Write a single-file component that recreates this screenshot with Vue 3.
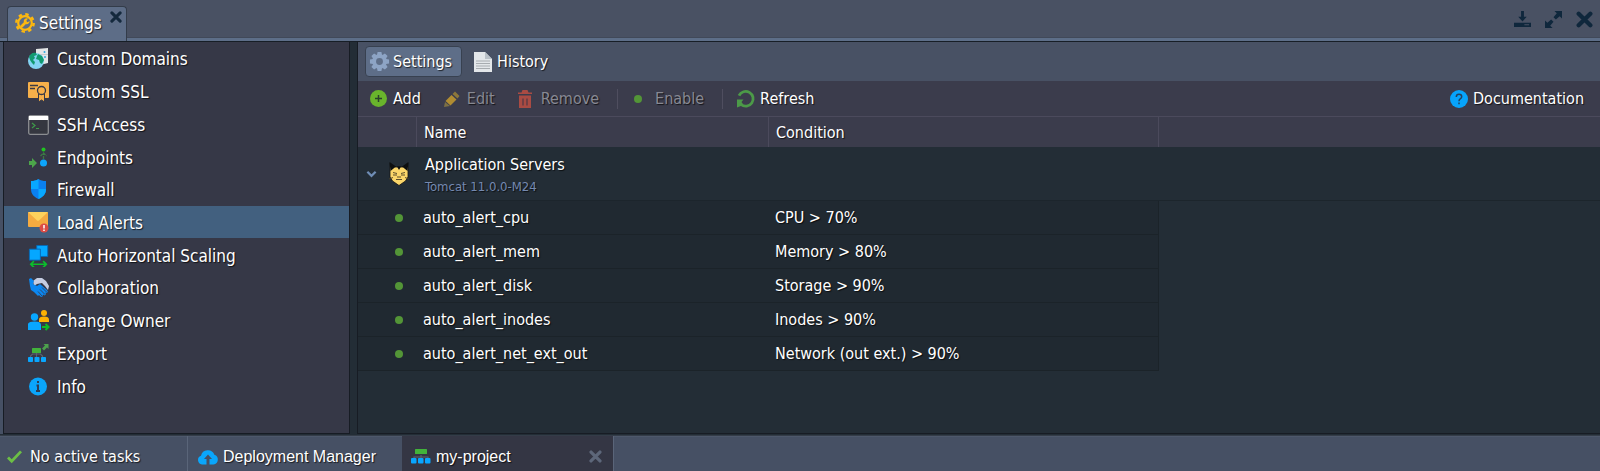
<script setup>
import { ref } from 'vue'

const menu = [
  { id: 'domains', label: 'Custom Domains' },
  { id: 'ssl', label: 'Custom SSL' },
  { id: 'ssh', label: 'SSH Access' },
  { id: 'endpoints', label: 'Endpoints' },
  { id: 'firewall', label: 'Firewall' },
  { id: 'alerts', label: 'Load Alerts' },
  { id: 'scaling', label: 'Auto Horizontal Scaling' },
  { id: 'collab', label: 'Collaboration' },
  { id: 'owner', label: 'Change Owner' },
  { id: 'export', label: 'Export' },
  { id: 'info', label: 'Info' },
]
const active = ref('alerts')

const alerts = [
  { name: 'auto_alert_cpu', condition: 'CPU > 70%' },
  { name: 'auto_alert_mem', condition: 'Memory > 80%' },
  { name: 'auto_alert_disk', condition: 'Storage > 90%' },
  { name: 'auto_alert_inodes', condition: 'Inodes > 90%' },
  { name: 'auto_alert_net_ext_out', condition: 'Network (out ext.) > 90%' },
]
</script>

<template>
  <div class="app">
    <svg class="sprite" aria-hidden="true">
      <symbol id="i-domains" viewBox="0 0 22 22">
        <path d="M8 1l12-1v15l-12 3z" fill="#e3e5e6" />
        <path d="M8 6h12v1H8z" fill="#c3c8cb" />
        <circle cx="16.500" cy="4" r="1" fill="#2fa9e0" /><circle cx="17" cy="9" r="1" fill="#2fa9e0" />
        <circle cx="8" cy="13" r="8" fill="#84d3f3" />
        <path d="M1 9c1-3 4-5 7-4l1 2-3 1 1 2-2 2 2 2-1 3-2-2-2-3zM10 6l4 2 2 4-2 4-2-1-1-3-3-1 1-3z" fill="#129a70" />
      </symbol>
      <symbol id="i-ssl" viewBox="0 0 22 22">
        <rect y="1" width="21" height="16" rx="1" fill="#f7b04a" />
        <path d="M2 4.500h8M2 7.500h5" stroke="#3b3a45" stroke-width="1.300" />
        <path d="M10.500 13v8l3-2 3 2v-8z" fill="#f7b04a" stroke="#363847" />
        <circle cx="13.500" cy="9.500" r="4" fill="#f7b04a" stroke="#363847" stroke-width="1.300" />
      </symbol>
      <symbol id="i-ssh" viewBox="0 0 22 22">
        <rect x=".7" y="1.700" width="19.600" height="18.600" rx="1.500" fill="#353740" stroke="#8b8d91" stroke-width="1.300" />
        <path d="M1 2h19v4H1z" fill="#fff" />
        <path d="M4 9l3 2.500L4 14M8 14.500h3" fill="none" stroke="#3f9a49" stroke-width="1.200" />
      </symbol>
      <symbol id="i-endpoints" viewBox="0 0 22 22">
        <circle cx="15.500" cy="2.500" r="2" fill="#20c520" />
        <path d="M15.500 12V6M12.500 9l3-3 3 3" fill="none" stroke="#3c7a44" stroke-width="1.300" stroke-dasharray="3 1" />
        <circle cx="15.500" cy="16" r="3.500" fill="#0da5fb" />
        <path d="M1 14h3v-3l5 5-5 5v-3H1z" fill="#4ca64a" />
      </symbol>
      <symbol id="i-firewall" viewBox="0 0 22 22">
        <path d="M10.500 0c2 1.500 4.500 2 7.500 2v8c0 5-3 8-7.500 10C6 18 3 15 3 10V2c3 0 5.500-.5 7.500-2z" fill="#0a80f0" />
        <path d="M10.500 0C8.500 1.500 6 2 3 2v8h7.500zM10.500 10H18c0 5-3 8-7.500 10z" fill="#08a8ff" />
      </symbol>
      <symbol id="i-alerts" viewBox="0 0 22 22">
        <rect width="20" height="15" rx="1" fill="#f5ab40" />
        <path d="M0 0h20l-8.500 8a2 2 0 0 1-3 0z" fill="#fed25c" />
        <circle cx="16" cy="16" r="4.500" fill="#dc4c45" />
        <path d="M16 13v3.500M16 17.500V19" stroke="#fff" stroke-width="1.500" />
      </symbol>
      <symbol id="i-scaling" viewBox="0 0 22 24">
        <path d="M8.500 .5h12v12h-12z" fill="#05a7ff" stroke="#0768b6" />
        <path d="M.5 4.500h12v12H.5z" fill="#05a7ff" stroke="#0768b6" />
        <path d="M2 21h17M5.500 17.500L2 21l3.500 3.500M15.500 17.500L19 21l-3.500 3.500" fill="none" stroke="#0abf2b" stroke-width="1.800" />
      </symbol>
      <symbol id="i-collab" viewBox="0 0 22 22">
        <path d="M5 4l4-3h5l4 3 3 5-1 4-3-4-3-3-5 1-3 2z" fill="#c6cde2" />
        <path d="M1 2l2-1 3 3-1 3 4 2 3-2 7 6 1 2-1.500 1-1-.5.500 2-1.500 1-1.500-1-.5 2-1.500.5-2-2-1 1-4-4-3-2-1-4z" fill="#0b87f2" />
        <path d="M14 10.500l5 5M12 12.500l5 5M10 14.500l4 4.500" stroke="#363847" stroke-width=".8" />
      </symbol>
      <symbol id="i-owner" viewBox="0 0 22 22">
        <circle cx="16" cy="3" r="3" fill="#fdb204" /><path d="M11 12V9.500q0-3 5-3t5 3V12z" fill="#fdb204" />
        <circle cx="6.500" cy="7" r="3.700" fill="#08a7ff" />
        <path d="M-.5 20v-4.500q0-4 7-4t6.500 4V20z" fill="#08a7ff" />
        <path d="M14 17h6M17.500 14l3 3-3 3" fill="none" stroke="#0dbb25" stroke-width="2" />
      </symbol>
      <symbol id="i-export" viewBox="0 0 22 22">
        <path d="M8.500 9v6M2.500 15v-2l2-2h8l2 2v2" fill="none" stroke="#5d6270" stroke-width="1.200" />
        <rect x="4" y="5" width="9" height="5" rx=".5" fill="#42b33b" />
        <g fill="#08a6ff"><rect y="14" width="5" height="5" rx=".8" /><rect x="6.500" y="14" width="5" height="5" rx=".8" /><rect x="13" y="14" width="5" height="5" rx=".8" /></g>
        <path d="M15.500 1h5v5l-1.500-1.500-3 3-2-2 3-3z" fill="#4da14d" />
      </symbol>
      <symbol id="i-info" viewBox="0 0 22 22">
        <circle cx="10" cy="10.500" r="9" fill="#0aa6fb" />
        <path d="M10 5v2M8.500 9.500H10V15M8 15h4" fill="none" stroke="#2b3e56" stroke-width="2" />
      </symbol>
      <symbol id="i-env" viewBox="0 0 20 16">
        <path d="M10 6v6M3 11V8h14v3" fill="none" stroke="#5d6270" stroke-width="1.200" />
        <rect x="4" width="12" height="5" rx=".5" fill="#42b33b" />
        <g fill="#08a6ff"><rect y="9" width="5.500" height="5.500" rx="1" /><rect x="7" y="9" width="5.500" height="5.500" rx="1" /><rect x="14" y="9" width="5.500" height="5.500" rx="1" /></g>
      </symbol>
      <symbol id="i-cross" viewBox="0 0 16 16">
        <path d="M2.500 2.500l11 11M13.500 2.500l-11 11" stroke="currentColor" stroke-width="4" stroke-linecap="round" />
      </symbol>
      <symbol id="i-cog" viewBox="0 0 22 22">
        <g fill="currentColor">
          <path d="M9 1h4l1 5H8zM9 21h4l1-5H8zM1 9v4l5 1V8zM21 9v4l-5 1V8z" />
          <path d="M9 1h4l1 5H8zM9 21h4l1-5H8zM1 9v4l5 1V8zM21 9v4l-5 1V8z" transform="rotate(45 11 11)" />
        </g>
        <circle cx="11" cy="11" r="5.600" fill="none" stroke="currentColor" stroke-width="4" />
      </symbol>
    </svg>

    <header class="titlebar">
      <div class="window-tab">
        <svg class="tab-gear" viewBox="0 0 20 20" aria-hidden="true">
          <circle cx="10" cy="10" r="8.700" fill="none" stroke="#fdb80f" stroke-width="2.400" stroke-dasharray="3.400 3.433" />
          <circle cx="10" cy="10" r="6.800" fill="none" stroke="#fdb80f" stroke-width="2.200" />
          <path d="M6.500 13.500l4-4" stroke="#fdb80f" stroke-width="2.600" stroke-linecap="round" />
          <path d="M13 5.500a3 3 0 1 0 1.700 2.500l-2.200 1.300-1.300-1.300z" fill="#fdb80f" />
        </svg>
        <span>Settings</span>
        <button class="tab-close" aria-label="Close Settings"><svg viewBox="0 0 16 16"><use href="#i-cross" /></svg></button>
      </div>
      <div class="window-tools">
        <button aria-label="Minimize"><svg viewBox="0 0 18 18"><path d="M7.500 0h3v6h3L9 11 4.500 6h3z" /><path d="M0 12.500h18V17H0zM11 14v1h5v-1z" fill-rule="evenodd" /></svg></button>
        <button aria-label="Expand"><svg viewBox="0 0 18 18"><path d="M10 0h8v8l-2.500-2.500-4 3.500-2.500-2.500 3.500-4zM8 18H0v-8l2.500 2.500 4-3.500L9 11.500l-3.500 4z" /></svg></button>
        <button aria-label="Close"><svg viewBox="0 0 16 16"><use href="#i-cross" /></svg></button>
      </div>
    </header>

    <main class="body">
      <nav class="sidebar" aria-label="Settings sections">
        <ul>
          <li v-for="item in menu" :key="item.id">
            <button :class="{ on: item.id === active }" @click="active = item.id">
              <svg viewBox="0 0 22 22" aria-hidden="true"><use :href="'#i-' + item.id" /></svg>
              <span>{{ item.label }}</span>
            </button>
          </li>
        </ul>
      </nav>

      <section class="panel">
        <div class="tabs">
          <button class="tab on">
            <svg class="cog" viewBox="0 0 22 22" aria-hidden="true"><use href="#i-cog" /></svg>
            <span>Settings</span>
          </button>
          <button class="tab">
            <svg class="doc" viewBox="0 0 18 20" aria-hidden="true">
              <path d="M0 0h11l7 7v13H0z" fill="#e3e7ea" /><path d="M11 0l7 7h-7z" fill="#b9c1c8" />
              <path d="M2 9h14M2 11.500h14M2 14h14M2 16.500h14" stroke="#a7acb0" />
            </svg>
            <span>History</span>
          </button>
        </div>

        <div class="toolbar">
          <button class="add">
            <svg viewBox="0 0 18 18" aria-hidden="true"><circle cx="8.500" cy="8.500" r="8.500" fill="#69b42c" /><path d="M8.500 5v7M5 8.500h7" stroke="#29412b" stroke-width="1.500" /></svg>
            <span>Add</span>
          </button>
          <button class="edit" disabled>
            <svg viewBox="0 0 18 18" aria-hidden="true"><path d="M1 17l1-5 5 4z" fill="#7d7044" /><path d="M2.500 11l6-6 5 4.500-6 6z" fill="#b08c32" /><path d="M9.500 4L12 1.500 16.500 6 14.500 8.500z" fill="#8c773b" /></svg>
            <span>Edit</span>
          </button>
          <button class="remove" disabled>
            <svg viewBox="0 0 14 18" aria-hidden="true"><path d="M0 2.500h3.500l1-2.500h5l1 2.500H14V4H0zM1 5.500h12V18H1z" fill="#a94b43" /><path d="M5 8.500v7M9 8.500v7" stroke="#653c44" stroke-width="1.600" /></svg>
            <span>Remove</span>
          </button>
          <i class="sep"></i>
          <button class="enable" disabled><b class="dot"></b><span>Enable</span></button>
          <i class="sep"></i>
          <button class="refresh">
            <svg viewBox="0 0 18 18" aria-hidden="true"><path d="M2 5.700A7.400 7.400 0 1 1 4 14.500" fill="none" stroke="#4c9a48" stroke-width="2.800" /><path d="M0 9.500h6.500L4.500 12l2 3L0 17.500z" fill="#4c9a48" /></svg>
            <span>Refresh</span>
          </button>
          <a class="docs" href="#documentation">
            <svg viewBox="0 0 18 18" aria-hidden="true"><circle cx="9" cy="9" r="9" fill="#07a4fb" /><path d="M6.300 7q0-2.700 2.700-2.700t2.700 2.400Q11.700 8 10.200 8.900 9 9.700 9 11.200M9 12.500v1.800" fill="none" stroke="#22425f" stroke-width="1.500" /></svg>
            <span>Documentation</span>
          </a>
        </div>

        <table class="grid">
          <colgroup><col class="c-mark" /><col class="c-name" /><col class="c-cond" /><col /></colgroup>
          <thead>
            <tr><th></th><th>Name</th><th>Condition</th><th></th></tr>
          </thead>
          <tbody>
            <tr class="group">
              <td class="mark">
                <div class="marks">
                  <button class="toggle" aria-label="Collapse group"><svg viewBox="0 0 12 8"><path d="M1.500 1.500L6 6l4.500-4.500" fill="none" stroke="#6f8db5" stroke-width="2.400" /></svg></button>
                  <svg class="cat" viewBox="0 0 20 24" aria-hidden="true">
                    <path d="M1 1l5 4h8l5-4v14l-2.500 4L10 23.500 3.500 19 1 15z" fill="#fbd66a" stroke="#111" stroke-width=".8" />
                    <path d="M.5 0L7 4.500 1.500 9zM19.500 0L13 4.500 18.500 9zM8 4.500h4L10 8z" fill="#0d0f10" />
                    <path d="M4 10.500l4 1M16 10.500l-4 1M4 13h4M16 13h-4M8 15h4M7 17.500h6M0 17l4-1.500M20 17l-4-1.500" fill="none" stroke="#4a4024" stroke-width=".9" />
                  </svg>
                </div>
              </td>
              <td colspan="3"><div class="group-name">Application Servers</div><div class="group-sub">Tomcat 11.0.0-M24</div></td>
            </tr>
            <tr v-for="row in alerts" :key="row.name" class="row">
              <td class="mark"><b class="dot"></b></td>
              <td>{{ row.name }}</td>
              <td>{{ row.condition }}</td>
              <td class="rest"></td>
            </tr>
          </tbody>
        </table>
      </section>
    </main>

    <footer class="taskbar">
      <div class="status">
        <svg viewBox="0 0 16 14" aria-hidden="true"><path d="M1 8l4 4L15 1.500" fill="none" stroke="#6cbf45" stroke-width="3" /></svg>
        <span>No active tasks</span>
      </div>
      <button class="task manager">
        <svg class="cloud" viewBox="0 0 20 16" aria-hidden="true"><path d="M4 15.500a4.500 4.500 0 0 1-1-8.700 7 7 0 0 1 13.400-1A5 5 0 0 1 15.500 15.500h-4V10H14L10 5.500 6 10h2.500v5.500z" fill="#0aa6fb" /></svg>
        <span>Deployment Manager</span>
      </button>
      <div class="task project">
        <svg class="env" viewBox="0 0 20 16" aria-hidden="true"><use href="#i-env" /></svg>
        <span>my-project</span>
        <button aria-label="Close my-project"><svg viewBox="0 0 16 16"><use href="#i-cross" /></svg></button>
      </div>
    </footer>
  </div>
</template>

<style>
body { background: #232d36; }
</style>

<style scoped>
* { box-sizing: border-box; }
.app {
  min-height: 100vh;
  display: flex;
  flex-direction: column;
  background: #232d36;
  color: #fff;
  font-family: "DejaVu Sans Condensed", "Noto Sans", sans-serif;
  font-size: 16px;
  line-height: 20px;
  text-shadow: 1px 1px 1px rgba(0, 0, 0, 0.7);
}
.sprite { position: absolute; width: 0; height: 0; }
button { background: none; border: 0; padding: 0; margin: 0; color: inherit; font: inherit; text-shadow: inherit; text-align: left; }
svg { display: block; flex: none; overflow: visible; }

.titlebar {
  display: flex;
  justify-content: space-between;
  align-items: flex-end;
  height: 42px;
  padding-left: 7px;
  background: #495163;
  border-bottom: 1px solid #171e26;
  box-shadow: inset 0 -3px #5d6e88, inset 0 -4px #414959;
}
.window-tab {
  display: flex;
  align-items: center;
  gap: 4px;
  height: 35px;
  padding: 0 4px 3px 7px;
  background: #5d6d87;
  border: 1px solid #333c4a;
  border-bottom: 0;
  border-radius: 4px 4px 0 0;
  font-size: 17px;
}
.tab-gear { width: 20px; height: 20px; }
.tab-close { align-self: flex-start; margin: 4px 0 0 4px; color: #14293d; }
.tab-close svg { width: 12px; height: 12px; }
.window-tools { display: flex; align-items: center; gap: 14px; height: 38px; padding-right: 7px; margin-bottom: 3px; color: #0f273c; }
.window-tools svg { width: 17px; height: 17px; fill: currentColor; }

.body { flex: 1; display: flex; gap: 7px; padding-left: 3px; background: #232d36; box-shadow: inset 3px 0 #465064; }
.sidebar { width: 347px; flex: none; background: #363847; border: 1px solid #171c24; border-top: 0; }
.sidebar ul { display: grid; grid-auto-rows: 1fr; height: 360px; margin: 0; padding: 0; list-style: none; font-size: 17px; }
.sidebar button { display: flex; align-items: center; gap: 7px; width: 100%; height: 100%; padding: 2px 0 0 24px; }
.sidebar button.on { background: #42607f; }
.sidebar svg { width: 22px; height: 22px; }

.panel { flex: 1; min-width: 0; border: 1px solid #171c24; border-top: 0; border-right: 0; }
.tabs { display: flex; align-items: center; gap: 7px; height: 39px; padding-left: 7px; background: #485164; }
.tab { display: flex; align-items: center; height: 31px; padding: 0 4px; border: 1px solid transparent; border-radius: 4px; gap: 5px; }
.tab.on { gap: 3px; padding: 0 9px 0 3px; background: #5e6e88; border-color: #384150; }
.cog { width: 21px; height: 21px; color: #8da4c5; }
.doc { width: 18px; height: 20px; }
.toolbar { display: flex; align-items: center; height: 36px; padding: 1px 16px 0 12px; background: #3b3c4c; border-bottom: 1px solid #4b4a5c; }
.toolbar button, .docs { display: flex; align-items: center; gap: 5px; color: #fff; text-decoration: none; }
.toolbar button:disabled { color: #888993; }
.toolbar svg { width: 18px; height: 18px; }
.toolbar .edit { margin-left: 22px; gap: 6px; }
.toolbar .remove { margin-left: 23px; gap: 9px; }
.toolbar .remove svg { width: 14px; }
.sep { width: 1px; height: 20px; margin: 0 14px 0 18px; background: #4f4e5f; }
.dot { display: block; width: 8px; height: 8px; border-radius: 50%; background: #539537; }
.toolbar .enable { gap: 13px; padding-left: 2px; }
.docs { margin-left: auto; }

.grid { width: 100%; table-layout: fixed; border-collapse: separate; border-spacing: 0; text-align: left; }
.c-mark { width: 59px; }
.c-name { width: 352px; }
.c-cond { width: 390px; }
.grid th { height: 30px; padding: 2px 7px 0; background: #3b3c4c; border-right: 1px solid #4b4a5c; font-weight: 400; }
.grid th:last-child { border-right: 0; }
.grid td { padding: 0 6px; }
.group td { height: 54px; border-bottom: 1px solid #1c252c; vertical-align: middle; }
.grid .group td:last-child { padding: 2px 8px 0; }
.group-name { height: 24px; line-height: 24px; }
.group-sub { font-size: 13px; color: #7589b0; }
.marks { display: flex; align-items: center; gap: 12px; }
.grid .group .mark { padding-left: 8px; padding-right: 0; }
.toggle svg { width: 11px; height: 8px; }
.cat { width: 20px; height: 24px; }
.row td { height: 34px; background: #202931; border-bottom: 1px solid #1b2329; }
.row td:nth-child(3) { border-right: 1px solid #1b2329; }
.row .rest { background: none; border: 0; }
.grid .row .mark { padding-left: 37px; }

.taskbar { display: flex; height: 36px; margin-top: 1px; border-top: 1px solid #343c48; background: #465064; box-shadow: inset 0 1px #4d586b; }
.status { display: flex; align-items: center; gap: 8px; width: 188px; padding-left: 7px; padding-top: 6px; border-right: 1px solid #5a6579; }
.status svg { width: 15px; height: 13px; }
.task { display: flex; align-items: center; gap: 5px; padding-top: 6px; font-family: "Liberation Sans", Arial, sans-serif; }
.manager { width: 214px; padding-left: 10px; }
.project { width: 212px; padding-left: 9px; padding-right: 11px; background: #343644; border-right: 1px solid #5a6579; }
.project button { margin-left: auto; color: #5d677a; }
.project button svg { width: 13px; height: 13px; }
.cloud, .env { width: 20px; height: 16px; }
</style>
